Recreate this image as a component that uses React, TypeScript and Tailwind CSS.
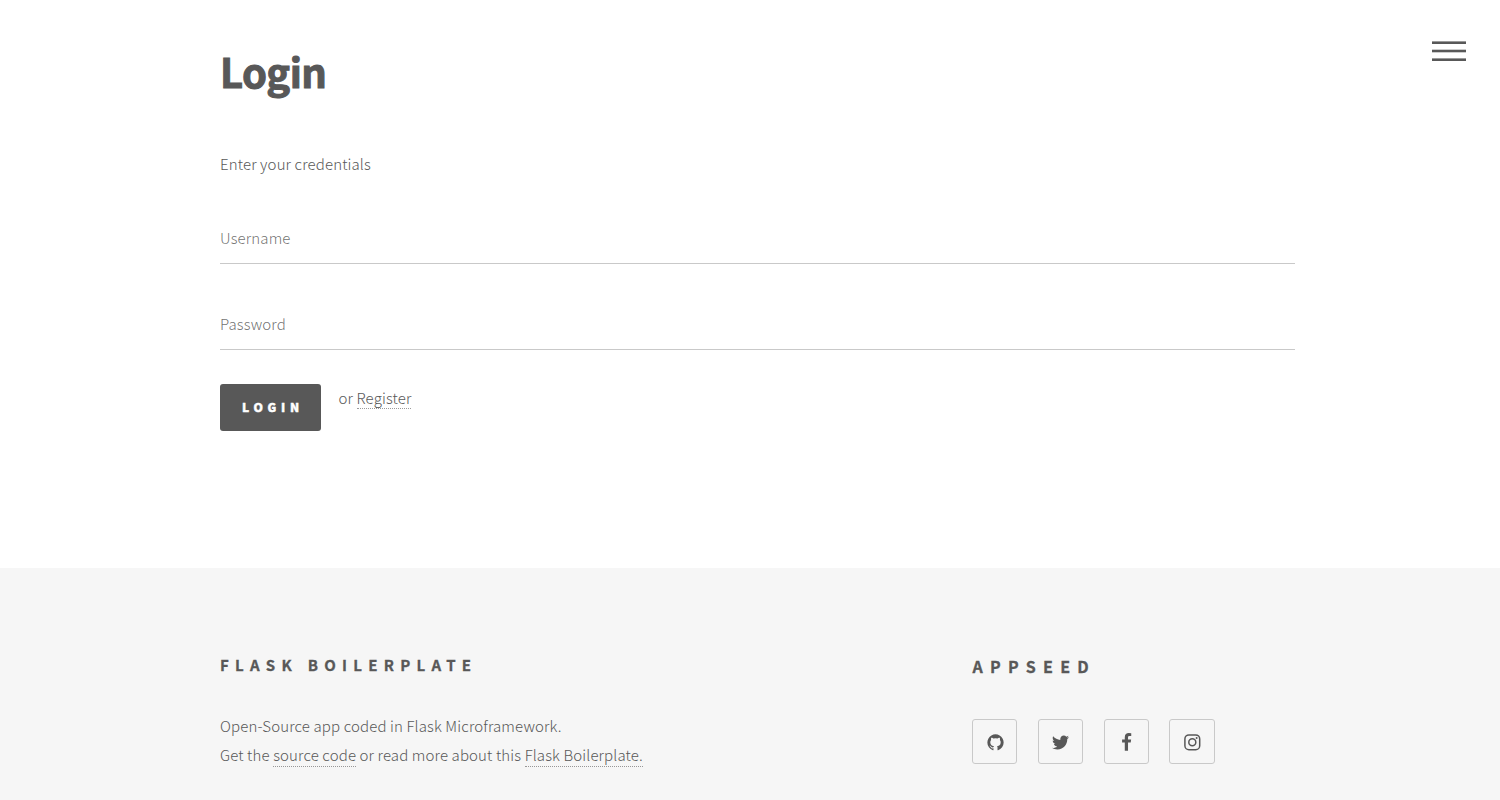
import type { ReactNode } from "react";
import { FaTwitter } from "react-icons/fa";

function GithubIcon() {
  return (
    <svg className="mt-px ml-px" width="19" height="19" viewBox="0 0 1792 1792" fill="currentColor">
      <path d="M896 128q209 0 385.5 103t279.5 279.5 103 385.5q0 251-146.5 451.5t-378.5 277.5q-27 5-40-7t-13-30q0-3 .5-76.5t.5-134.5q0-97-52-142 57-6 102.5-18t94-39 81-66.5 53-105 20.5-150.5q0-119-79-206 37-91-8-204-28-9-81 11t-92 44l-38 24q-93-26-192-26t-192 26q-16-11-42.5-27t-83.5-38.5-85-13.5q-45 113-8 204-79 87-79 206 0 85 20.5 150t52.5 105 80.5 67 94 39 102.5 18q-39 36-49 103-21 10-45 15t-57 5-65.5-21.5-55.5-62.5q-19-32-48.5-52t-49.5-24l-20-3q-21 0-29 4.5t-5 11.5 9 14 13 12l7 5q22 10 43.5 38t31.5 51l10 23q13 38 44 61.5t67 30 69.5 7 55.5-3.5l23-4q0 38 .5 88.5t.5 54.5q0 18-13 30t-40 7q-232-77-378.5-277.5t-146.5-451.5q0-209 103-385.5t279.5-279.5 385.5-103z" />
    </svg>
  );
}

function FacebookIcon() {
  return (
    <svg className="mt-px" width="19" height="19" viewBox="0 0 1792 1792" fill="currentColor">
      <path d="M1343 12v264h-157q-86 0-116 36t-30 108v189h293l-39 296h-254v759h-306v-759h-255v-296h255v-218q0-186 104-288.500t277-102.500q147 0 228 12z" />
    </svg>
  );
}

function InstagramIcon() {
  return (
    <svg width="17" height="17" viewBox="0 0 17 17" fill="none" stroke="currentColor" strokeWidth="1.5">
      <rect x="0.9" y="0.9" width="14.8" height="14.8" rx="4" />
      <circle cx="8.3" cy="8.3" r="3.5" />
      <circle cx="12.6" cy="4" r="1" fill="currentColor" stroke="none" />
    </svg>
  );
}

const socials: { label: string; icon: ReactNode }[] = [
  { label: "GitHub", icon: <GithubIcon /> },
  { label: "Twitter", icon: <FaTwitter size={17} /> },
  { label: "Facebook", icon: <FacebookIcon /> },
  { label: "Instagram", icon: <InstagramIcon /> },
];

const link = "inline-block border-b border-dotted border-[#585858]/60 leading-[21px]";
const field =
  "block h-[51px] w-full border-b border-[#c9c9c9] bg-transparent pb-[2px] text-[15px] tracking-[0.13px] font-light outline-none placeholder:text-[#585858]/85";

export default function App() {
  return (
    <div className="flex h-[800px] flex-col overflow-hidden bg-white font-['Noto_Sans_CJK_SC',sans-serif] text-[15px] font-light tracking-[0.13px] text-[#585858]">
      <main className="relative h-[568px] shrink-0 pt-[41px] pl-[220px]">
        <button aria-label="Menu" className="absolute top-[41px] right-[34px]">
          <svg width="34" height="20" viewBox="0 0 34 20" fill="#585858">
            <rect y="0.4" width="34" height="2.6" />
            <rect y="8.7" width="34" height="2.6" />
            <rect y="17.4" width="34" height="2.6" />
          </svg>
        </button>
        <div className="w-[1075px]">
          <h1 className="h-[60px] text-[40px] leading-[60px] font-bold tracking-[-0.6px] [-webkit-text-stroke:1px_#585858]">
            Login
          </h1>
          <p className="mt-[48px] leading-[29px]">Enter your credentials</p>
          <form className="mt-[35px]">
            <input className={field} placeholder="Username" />
            <input className={`mt-[35px] ${field}`} type="password" placeholder="Password" />
            <div className="mt-[34px] flex items-start">
              <button
                type="button"
                className="h-[47px] w-[101px] rounded-[3px] bg-[#585858] pb-[2px] pl-[5px] text-[12px] leading-[45px] font-black tracking-[4.7px] text-white [-webkit-text-stroke:0.4px_white]"
              >
                LOGIN
              </button>
              <p className="-mt-px ml-[17.5px] leading-[29px]">
                or <a className={`h-[22px] ${link}`}>Register</a>
              </p>
            </div>
          </form>
        </div>
      </main>
      <footer className="flex grow bg-[#f6f6f6] pt-[82px] pl-[220px]">
        <section className="w-[752px]">
          <h2 className="text-[15px] leading-[29px] font-bold tracking-[6.28px] [-webkit-text-stroke:0.3px_#585858]">
            FLASK BOILERPLATE
          </h2>
          <p className="mt-[32px] leading-[29px]">
            Open-Source app coded in Flask Microframework.
            <br />
            Get the <a className={`h-[23px] ${link}`}>source code</a> or read more about this{" "}
            <a className={`h-[23px] ${link}`}>Flask Boilerplate.</a>
          </p>
        </section>
        <section>
          <h2 className="mt-[1px] pl-[0.5px] text-[16px] leading-[30px] font-bold tracking-[7.3px] [-webkit-text-stroke:0.3px_#585858]">
            APPSEED
          </h2>
          <ul className="mt-[38px] flex gap-[20.6px]">
            {socials.map(({ label, icon }) => (
              <li
                key={label}
                aria-label={label}
                className="flex h-[45px] w-[45.2px] items-center justify-center rounded-[3px] border border-[#c9c9c9] pt-px pl-px"
              >
                {icon}
              </li>
            ))}
          </ul>
        </section>
      </footer>
    </div>
  );
}
